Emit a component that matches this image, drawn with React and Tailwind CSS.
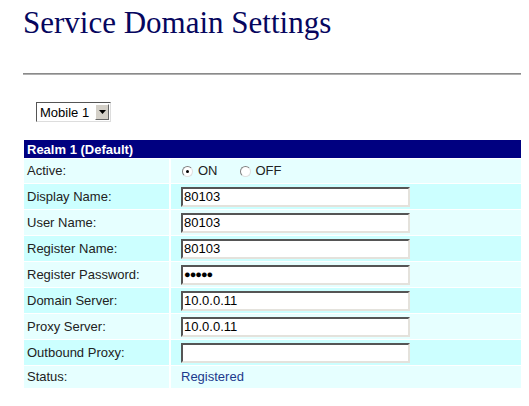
import { useState } from 'react'

const ROWS = [
  { label: 'Display Name:', value: '80103' },
  { label: 'User Name:', value: '80103' },
  { label: 'Register Name:', value: '80103' },
  { label: 'Register Password:', value: '80103', password: true },
  { label: 'Domain Server:', value: '10.0.0.11' },
  { label: 'Proxy Server:', value: '10.0.0.11' },
  { label: 'Outbound Proxy:', value: '' },
]

// alternating row shades, first data row (Active) is the lighter one
const rowBg = (i) => (i % 2 === 0 ? 'bg-[#e6ffff]' : 'bg-[#ccffff]')

function Radio({ checked }) {
  return (
    <span className="relative inline-block h-[11px] w-[11px] rounded-full border border-t-[#808080] border-l-[#808080] border-r-[#e0e0e0] border-b-[#e0e0e0] bg-white">
      {checked && <span className="absolute left-[3px] top-[3px] h-[3px] w-[3px] rounded-full bg-black" />}
    </span>
  )
}

function TextBox({ value, password }) {
  return (
    <div className="flex h-[20px] w-[229px] items-center border-2 border-t-[#555] border-l-[#555] border-r-[#e4e2dc] border-b-[#e4e2dc] bg-white px-[1px] text-[13px] text-black">
      {password ? <span className="text-[11px] tracking-[-1px]">●●●●●</span> : value}
    </div>
  )
}

export default function App() {
  const [active] = useState(true)

  return (
    <div className="min-h-[406px] w-[529px] bg-white pl-[23px] pr-[5px] font-['Liberation_Sans',Arial,sans-serif] text-[13px] text-[#222]">
      <h1 className="pt-[5px] font-['Liberation_Serif','Times_New_Roman',serif] text-[31px] leading-[36px] text-[#06065e]">
        Service Domain Settings
      </h1>

      <div className="mt-[32px] h-[2px] w-[498px] border-t border-t-[#8a8a8a] border-b border-b-[#b0b0b0]" />

      <div className="ml-[13px] mt-[27px] flex h-[20px] w-[75px] items-center border border-t-[#555] border-l-[#555] border-r-[#ddd] border-b-[#ddd] bg-white">
        <span className="flex-1 pl-[3px] text-[13px] leading-none text-black">Mobile 1</span>
        <span className="mr-[1px] flex h-[16px] w-[14px] items-center justify-center border border-t-[#fff] border-l-[#fff] border-r-[#666] border-b-[#666] bg-[#d4d0c8]">
          <svg width="7" height="4" viewBox="0 0 7 4"><path d="M0 0h7L3.5 4z" fill="#000" /></svg>
        </span>
      </div>

      <table className="-mx-[1px] mt-[17px] w-[501px] border-separate border-spacing-x-[2px] border-spacing-y-[1px]">
        <tbody>
          <tr>
            <td colSpan={2} className="h-[18px] bg-[#000080] px-[3px] text-[13px] font-bold leading-none text-white">
              Realm 1 (Default)
            </td>
          </tr>
          <tr className={rowBg(0)}>
            <td className="h-[24px] w-[145px] px-[3px]">Active:</td>
            <td className="pl-[11px]">
              <div className="flex items-center">
                <Radio checked={active} />
                <span className="ml-[5px] mr-[22px]">ON</span>
                <Radio checked={!active} />
                <span className="ml-[5px]">OFF</span>
              </div>
            </td>
          </tr>
          {ROWS.map((r, i) => (
            <tr key={r.label} className={rowBg(i + 1)}>
              <td className="h-[25px] px-[3px]">{r.label}</td>
              <td className="pl-[10px]">
                <TextBox value={r.value} password={r.password} />
              </td>
            </tr>
          ))}
          <tr className={rowBg(ROWS.length + 1)}>
            <td className="h-[22px] px-[3px]">Status:</td>
            <td className="pl-[10px] text-[#1c3a8c]">Registered</td>
          </tr>
        </tbody>
      </table>
    </div>
  )
}
